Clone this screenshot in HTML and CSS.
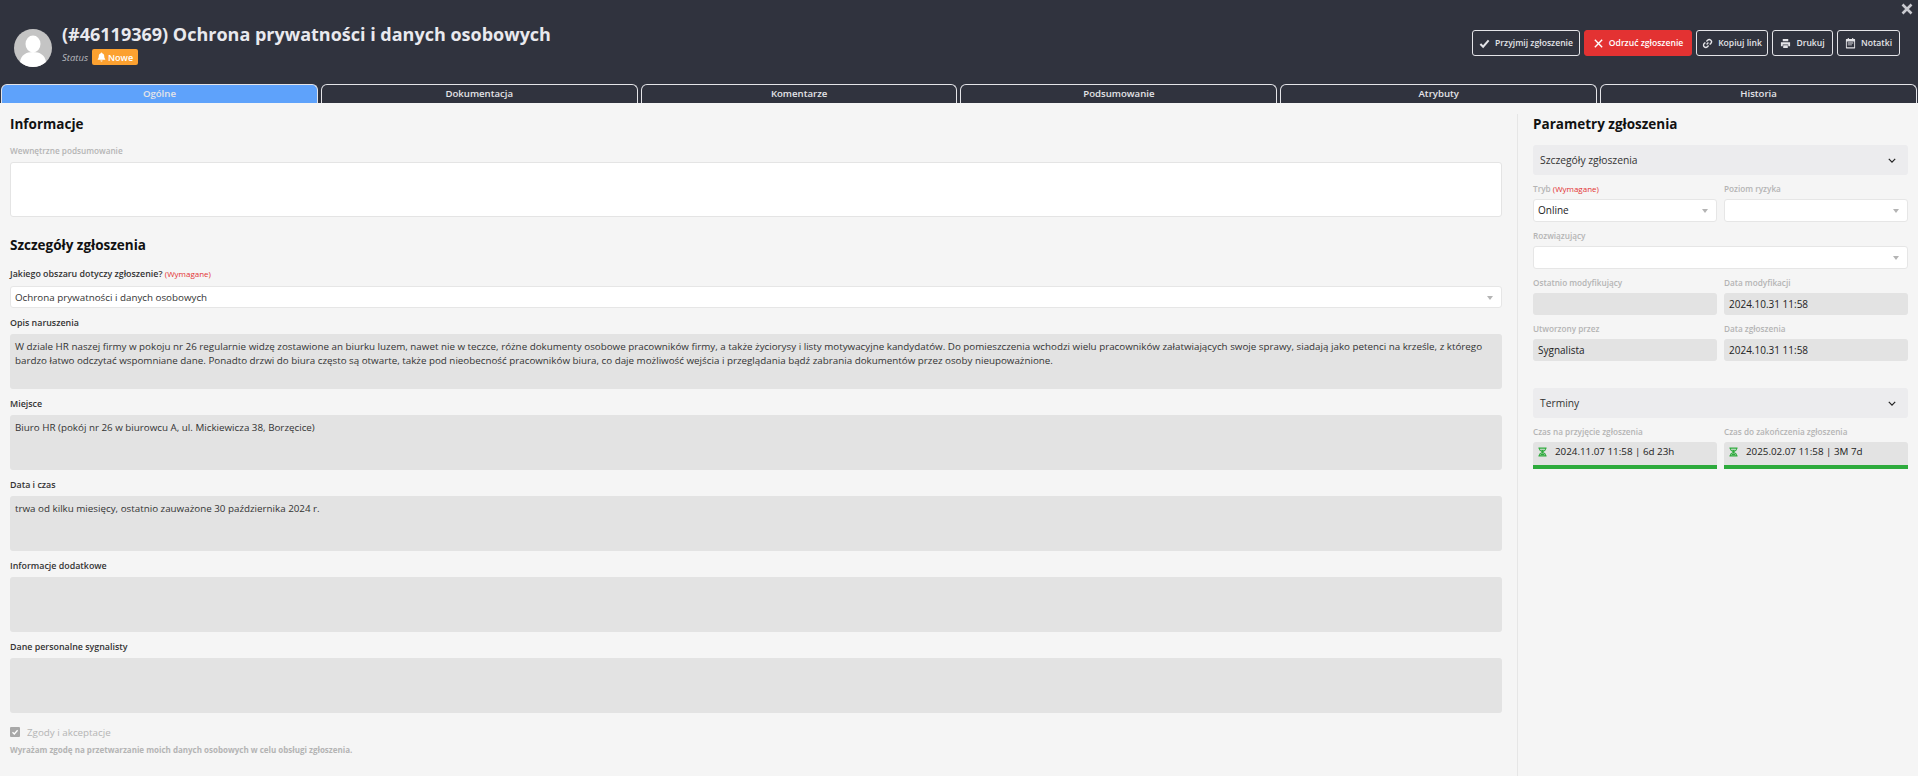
FILE: index.html
```html
<!DOCTYPE html>
<html lang="pl">
<head>
    <meta charset="UTF-8">
    <meta name="viewport" content="width=device-width, initial-scale=1.0">
    <title>Zgłoszenie #46119369</title>
    <link rel="stylesheet" href="styles.css">
</head>
<body>
    <div class="top">
        <svg class="close" viewBox="0 0 12 12"><path d="M1.5 1.5l9 9M10.5 1.5l-9 9"/></svg>
        <div class="header">
            <div class="person">
                <svg class="avatar" viewBox="0 0 38 38">
                    <circle cx="19" cy="19" r="19" fill="#c4c4c4"/>
                    <ellipse cx="19" cy="15" rx="7.5" ry="8.5" fill="#fff"/>
                    <path d="M6 33c1-7 6-10 13-10s12 3 13 10c-3.500 3-8 5-13 5s-9.500-2-13-5z" fill="#fff"/>
                </svg>
                <div>
                    <h1>(#46119369) Ochrona prywatności i danych osobowych</h1>
                    <div class="status">
                        <span class="status-label">Status</span>
                        <span class="badge">
                            <svg viewBox="0 0 10 11"><path d="M5 0.500c-.5 0-.8.300-.8.800C2.800 1.700 2 2.800 2 4.200c0 2.300-.5 3-1.200 3.700v.7h8.400v-.7C8.500 7.200 8 6.500 8 4.200c0-1.400-.8-2.500-2.200-2.900 0-.5-.3-.8-.8-.8zM3.800 9.300c0 .7.500 1.200 1.200 1.200s1.200-.5 1.200-1.200z"/></svg>
                            Nowe
                        </span>
                    </div>
                </div>
            </div>
            <div class="actions">
                <button class="btn wide">
                    <svg viewBox="0 0 12 12"><path class="thick" d="M1.500 6.500l3 3 6-7"/></svg>
                    Przyjmij zgłoszenie
                </button>
                <button class="btn wide danger">
                    <svg viewBox="0 0 12 12"><path d="M2 2l8 8M10 2l-8 8"/></svg>
                    Odrzuć zgłoszenie
                </button>
                <button class="btn link-btn">
                    <svg viewBox="0 0 12 12"><path d="M5 7l2-2M4.800 3.700l1.300-1.300a2 2 0 0 1 3.500 3.500L8.300 7.200M7.200 8.300L5.900 9.600A2 2 0 0 1 2.400 6.100l1.300-1.300"/></svg>
                    Kopiuj link
                </button>
                <button class="btn print-btn">
                    <svg viewBox="0 0 12 12"><path class="fill" d="M3 1h6v2.500H3zM1 4.500h10v4.500H9V7H3v2H1zM3.500 7.800h5V11h-5z"/></svg>
                    Drukuj
                </button>
                <button class="btn notes-btn">
                    <svg viewBox="0 0 12 12"><path class="fill" fill-rule="evenodd" d="M3 0h1.200v1.200h3.600V0H9v1.200h1.500c.3 0 .5.200.5.500v9.300c0 .3-.2.500-.5.500h-9c-.3 0-.5-.2-.5-.5V1.700c0-.3.200-.5.500-.5H3zM2 3.800V10h8V3.800zM3 5h6v1H3zM3 7h4.500v1H3z"/></svg>
                    Notatki
                </button>
            </div>
        </div>
        <div class="tabs">
            <div class="tab active">Ogólne</div>
            <div class="tab">Dokumentacja</div>
            <div class="tab">Komentarze</div>
            <div class="tab">Podsumowanie</div>
            <div class="tab">Atrybuty</div>
            <div class="tab">Historia</div>
        </div>
    </div>

    <div class="main">
        <div class="left">
            <h2>Informacje</h2>
            <div class="field first">
                <label class="muted">Wewnętrzne podsumowanie</label>
                <div class="box white"></div>
            </div>

            <h2 class="second">Szczegóły zgłoszenia</h2>
            <div class="field area">
                <label>Jakiego obszaru dotyczy zgłoszenie? <span class="required">(Wymagane)</span></label>
                <div class="select long">
                    Ochrona prywatności i danych osobowych
                    <span class="caret"></span>
                </div>
            </div>
            <div class="field">
                <label>Opis naruszenia</label>
                <div class="box">W dziale HR naszej firmy w pokoju nr 26 regularnie widzę zostawione an biurku luzem, nawet nie w teczce, różne dokumenty osobowe pracowników firmy, a także życiorysy i listy motywacyjne kandydatów. Do pomieszczenia wchodzi wielu pracowników załatwiających swoje sprawy, siadają jako petenci na krześle, z którego bardzo łatwo odczytać wspomniane dane. Ponadto drzwi do biura często są otwarte, także pod nieobecność pracowników biura, co daje możliwość wejścia i przeglądania bądź zabrania dokumentów przez osoby nieupoważnione.</div>
            </div>
            <div class="field">
                <label>Miejsce</label>
                <div class="box">Biuro HR (pokój nr 26 w biurowcu A, ul. Mickiewicza 38, Borzęcice)</div>
            </div>
            <div class="field">
                <label>Data i czas</label>
                <div class="box">trwa od kilku miesięcy, ostatnio zauważone 30 października 2024 r.</div>
            </div>
            <div class="field">
                <label>Informacje dodatkowe</label>
                <div class="box"></div>
            </div>
            <div class="field">
                <label>Dane personalne sygnalisty</label>
                <div class="box"></div>
            </div>

            <div class="consent">
                <span class="checkbox">
                    <svg viewBox="0 0 10 10"><path d="M2.500 5.200l1.800 1.800 3.300-3.800"/></svg>
                </span>
                Zgody i akceptacje
            </div>
            <div class="consent-text">Wyrażam zgodę na przetwarzanie moich danych osobowych w celu obsługi zgłoszenia.</div>
        </div>

        <div class="right">
            <h2>Parametry zgłoszenia</h2>

            <div class="accordion">
                Szczegóły zgłoszenia
                <svg viewBox="0 0 10 6"><path d="M1 1l4 4 4-4"/></svg>
            </div>
            <div class="params">
                <div class="param">
                    <label class="muted">Tryb <span class="required">(Wymagane)</span></label>
                    <div class="select">Online<span class="caret"></span></div>
                </div>
                <div class="param">
                    <label class="muted">Poziom ryzyka</label>
                    <div class="select"><span class="caret"></span></div>
                </div>
                <div class="param full">
                    <label class="muted">Rozwiązujący</label>
                    <div class="select"><span class="caret"></span></div>
                </div>
                <div class="param">
                    <label class="muted">Ostatnio modyfikujący</label>
                    <div class="readonly"></div>
                </div>
                <div class="param">
                    <label class="muted">Data modyfikacji</label>
                    <div class="readonly">2024.10.31 11:58</div>
                </div>
                <div class="param">
                    <label class="muted">Utworzony przez</label>
                    <div class="readonly">Sygnalista</div>
                </div>
                <div class="param">
                    <label class="muted">Data zgłoszenia</label>
                    <div class="readonly">2024.10.31 11:58</div>
                </div>
            </div>

            <div class="accordion terms">
                Terminy
                <svg viewBox="0 0 10 6"><path d="M1 1l4 4 4-4"/></svg>
            </div>
            <div class="params">
                <div class="param">
                    <label class="muted">Czas na przyjęcie zgłoszenia</label>
                    <div class="deadline">
                        <svg viewBox="0 0 10 10"><path d="M.5 .7h9M.5 9.300h9M1.800 .7v1.500c0 1.400 3.200 1.800 3.200 2.800s-3.200 1.400-3.200 2.800v1.500M8.200 .7v1.500C8.200 3.600 5 4 5 5s3.200 1.400 3.200 2.800v1.500"/><path class="sand" d="M3 2.500h4L5 4.500zM2.500 8.700c0-1 1.500-1.700 2.500-2.200 1 .5 2.500 1.200 2.500 2.200z"/></svg>
                        2024.11.07 11:58 | 6d 23h
                    </div>
                </div>
                <div class="param">
                    <label class="muted">Czas do zakończenia zgłoszenia</label>
                    <div class="deadline">
                        <svg viewBox="0 0 10 10"><path d="M.5 .7h9M.5 9.300h9M1.800 .7v1.500c0 1.400 3.200 1.800 3.200 2.800s-3.200 1.400-3.200 2.800v1.500M8.200 .7v1.500C8.200 3.600 5 4 5 5s3.200 1.400 3.200 2.800v1.500"/><path class="sand" d="M3 2.500h4L5 4.500zM2.500 8.700c0-1 1.500-1.700 2.500-2.200 1 .5 2.500 1.200 2.500 2.200z"/></svg>
                        2025.02.07 11:58 | 3M 7d
                    </div>
                </div>
            </div>
        </div>
    </div>
</body>
</html>
```

FILE: styles.css
```css
* {
    box-sizing: border-box;
}
body {
    margin: 0;
    height: 776px;
    overflow: hidden;
    background: #f5f5f5;
    font-family: 'Open Sans', sans-serif;
    font-size: 9.800px;
    color: #222;
}
.top {
    position: relative;
    background: #30333e;
    height: 103px;
}
.close {
    position: absolute;
    top: 3px;
    right: 5px;
    width: 12px;
    height: 12px;
    fill: none;
    stroke: #c9cad0;
    stroke-width: 2.6;
}
.header {
    height: 84px;
    display: flex;
    justify-content: space-between;
    padding: 22px 18px 0 14px;
}
.person {
    display: flex;
    gap: 10px;
}
.avatar {
    width: 38px;
    height: 38px;
    margin-top: 7px;
}
h1 {
    margin: 0;
    color: #e9e9ee;
    font-size: 18px;
    font-weight: 700;
    line-height: 24px;
}
.status {
    display: flex;
    align-items: center;
    gap: 4px;
    margin-top: 3px;
}
.status-label {
    color: #b8b9be;
    font-style: italic;
    font-size: 9.500px;
}
.badge {
    display: flex;
    align-items: center;
    gap: 2px;
    height: 16px;
    padding: 0 5px;
    background: #fca130;
    color: #fff;
    border-radius: 2px;
    font-size: 9px;
    font-weight: 600;
}
.badge svg {
    width: 9px;
    height: 10px;
    fill: #fff;
}
.actions {
    display: flex;
    gap: 4px;
    margin-top: 8px;
}
.btn {
    display: flex;
    align-items: center;
    justify-content: center;
    gap: 5px;
    height: 26px;
    padding: 0;
    background: transparent;
    color: #e4e4e8;
    border: 1px solid #e4e4e8;
    border-radius: 3px;
    font-family: inherit;
    font-size: 8.600px;
    font-weight: 600;
}
.btn svg {
    width: 11px;
    height: 11px;
    fill: none;
    stroke: #e4e4e8;
    stroke-width: 1.500;
}
.btn svg .thick {
    stroke-width: 2.200;
}
.btn svg .fill {
    fill: #e4e4e8;
    stroke: none;
}
.wide {
    width: 108px;
}
.danger {
    background: #e33232;
    border-color: #e33232;
    color: #fff;
}
.danger svg {
    stroke: #fff;
}
.link-btn {
    width: 72px;
}
.print-btn {
    width: 61px;
}
.notes-btn {
    width: 63px;
}
.tabs {
    display: flex;
    gap: 3px;
    padding: 0 1px;
}
.tab {
    flex: 1;
    height: 19px;
    border: 1px solid #e4e4e8;
    border-bottom: none;
    border-radius: 6px 6px 0 0;
    color: #e4e4e8;
    text-align: center;
    font-size: 9.600px;
    font-weight: 600;
    line-height: 17px;
}
.tab.active {
    background: #5ea2fb;
}
.main {
    display: flex;
    height: 673px;
}
.left {
    width: 1517px;
    padding: 11px 15px 0 10px;
}
.right {
    flex: 1;
    margin-top: 11px;
    padding: 0 10px 0 15px;
    border-left: 1px solid #e6e6e6;
}
h2 {
    margin: 0;
    color: #111;
    font-size: 13.500px;
    font-weight: 700;
    line-height: 20px;
}
h2.second {
    margin-top: 18px;
}
label {
    display: block;
    height: 12px;
    margin-bottom: 5px;
    color: #333;
    font-size: 8.900px;
    font-weight: 600;
    line-height: 12px;
}
label.muted {
    color: #b4b4b4;
    font-size: 8.200px;
    font-weight: 600;
}
.required {
    color: #e33232;
    font-weight: 400;
    font-size: 8px;
}
.field {
    margin-top: 9px;
}
.field.first {
    margin-top: 11px;
}
.field.area {
    margin-top: 13px;
}
.field.area label {
    margin-bottom: 6px;
}
.box {
    height: 55px;
    padding: 6px 5px;
    background: #e3e3e3;
    border-radius: 3px;
    line-height: 14px;
    color: #333;
}
.box.white {
    background: #fff;
    border: 1px solid #e4e4e4;
}
.select {
    position: relative;
    height: 23px;
    padding: 0 4px;
    background: #fff;
    border: 1px solid #e6e6e6;
    border-radius: 3px;
    font-size: 10px;
    line-height: 21px;
    color: #222;
}
.select.long {
    height: 22px;
    font-size: 9.800px;
    color: #333;
}
.caret {
    position: absolute;
    right: 8px;
    top: 9px;
    width: 0;
    height: 0;
    border-left: 3.500px solid transparent;
    border-right: 3.500px solid transparent;
    border-top: 4px solid #b4b4b4;
}
.accordion {
    display: flex;
    justify-content: space-between;
    align-items: center;
    height: 30px;
    margin-top: 11px;
    padding: 0 12px 0 7px;
    background: #ececee;
    border-radius: 3px;
    font-size: 10.300px;
    font-weight: 500;
    color: #333;
}
.accordion svg {
    width: 8px;
    height: 5px;
    fill: none;
    stroke: #222;
    stroke-width: 1.500;
}
.accordion.terms {
    margin-top: 27px;
}
.params {
    display: grid;
    grid-template-columns: 184px 184px;
    column-gap: 7px;
    row-gap: 8px;
    margin-top: 8px;
}
.param label {
    margin-bottom: 4px;
}
.full {
    grid-column: 1 / 3;
}
.readonly {
    height: 22px;
    padding: 0 5px;
    background: #e3e3e3;
    border-radius: 3px;
    font-size: 10px;
    line-height: 22px;
    color: #222;
}
.deadline {
    display: flex;
    align-items: center;
    gap: 8px;
    height: 27px;
    padding: 0 5px 4px;
    background: #e3e3e3;
    border-bottom: 4px solid #2eab3d;
    border-radius: 3px 3px 0 0;
    font-size: 9.800px;
    color: #222;
}
.deadline svg {
    width: 9px;
    height: 10px;
    fill: none;
    stroke: #2eab3d;
    stroke-width: 1.200;
}
.deadline svg .sand {
    fill: #2eab3d;
    stroke: none;
}
.consent {
    display: flex;
    align-items: center;
    gap: 7px;
    height: 14px;
    margin-top: 12px;
    color: #b4b4b4;
    font-size: 9.800px;
}
.checkbox {
    display: flex;
    width: 10px;
    height: 10px;
    background: #a8a8a8;
    border-radius: 1px;
}
.checkbox svg {
    fill: none;
    stroke: #fff;
    stroke-width: 1.300;
}
.consent-text {
    margin-top: 5px;
    color: #b4b4b4;
    font-size: 8px;
    font-weight: 700;
    line-height: 12px;
}
```
